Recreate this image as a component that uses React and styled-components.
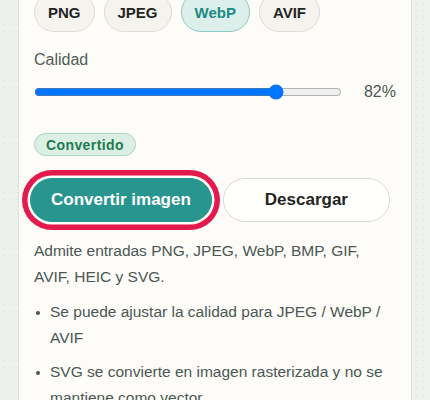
import React from "react";
import styled, { createGlobalStyle } from "styled-components";

const Global = createGlobalStyle`
  html, body { margin: 0; padding: 0; }
  body {
    background-color: #eef1ed;
    background-image: radial-gradient(circle, rgba(180,190,182,0.3) 0.6px, transparent 0.8px);
    background-size: 7px 7px;
    font-family: "Liberation Sans", Arial, sans-serif;
    overflow: hidden;
  }
`;

const Page = styled.div`
  padding: 0 18px;
  margin-top: -40px;
`;

const Card = styled.section`
  background: #fdfcf8;
  border: 1px solid #e2e1d9;
  border-radius: 16px;
  padding: 31px 15px 24px;
  display: flex;
  flex-direction: column;
`;

const ChipRow = styled.div`
  display: flex;
  gap: 9px;
`;

const Chip = styled.button`
  height: 40px;
  padding: 0 13px;
  border-radius: 20px;
  font-family: inherit;
  font-size: 15px;
  font-weight: 700;
  border: 1px solid ${(p) => (p.$active ? "#8ccbc5" : "#dedcd4")};
  background: ${(p) => (p.$active ? "#dcefeb" : "#f4f3ee")};
  color: ${(p) => (p.$active ? "#1b8b84" : "#1f2523")};
`;

const Label = styled.div`
  margin-top: 17px;
  font-size: 16px;
  line-height: 22px;
  color: #505c58;
`;

const SliderRow = styled.div`
  margin-top: 9px;
  height: 24px;
  display: flex;
  align-items: center;
`;

const Range = styled.input`
  flex: 1;
  margin: 0;
  min-width: 0;
`;

const Value = styled.span`
  min-width: 54px;
  text-align: right;
  font-size: 16px;
  color: #4b5753;
`;

const Badge = styled.span`
  align-self: flex-start;
  margin-top: 29px;
  height: 23px;
  box-sizing: border-box;
  padding: 0 11px;
  display: inline-flex;
  align-items: center;
  border-radius: 12px;
  background: #dcefe5;
  border: 1px solid #a9d5c1;
  color: #1f7a52;
  font-size: 14px;
  font-weight: 700;
  letter-spacing: 0.4px;
`;

const ButtonRow = styled.div`
  margin-top: 22px;
  margin-left: -4px;
  display: flex;
  gap: 11px;
`;

const Button = styled.button`
  height: 44px;
  box-sizing: border-box;
  border-radius: 22px;
  font-family: inherit;
  font-size: 17px;
  font-weight: 700;
  padding: 0 ${(p) => (p.$primary ? "20px" : "41px")};
  border: 1px solid ${(p) => (p.$primary ? "#28958f" : "#dcdad2")};
  background: ${(p) => (p.$primary ? "#28958f" : "#fffffd")};
  color: ${(p) => (p.$primary ? "#ffffff" : "#1f2523")};
  ${(p) =>
    p.$highlight &&
    `box-shadow: 0 0 0 2.5px #fdfcf8, 0 0 0 8px #e31b4c;`}
`;

const Text = styled.p`
  margin: 16px 0 0;
  font-size: 15.5px;
  line-height: 26px;
  color: #4b5753;
`;

const List = styled.ul`
  margin: 9px 0 0;
  padding: 0;
  list-style: none;
`;

const Item = styled.li`
  position: relative;
  padding-left: 16px;
  font-size: 15.5px;
  line-height: 26px;
  color: #4b5753;
  & + & { margin-top: 8px; }
  &::before {
    content: "";
    position: absolute;
    left: 2px;
    top: 12px;
    width: 4px;
    height: 4px;
    border-radius: 50%;
    background: #4b5753;
  }
`;

export default function App() {
  const formats = ["PNG", "JPEG", "WebP", "AVIF"];
  return (
    <>
      <Global />
      <Page>
        <Card>
          <ChipRow>
            {formats.map((f) => (
              <Chip key={f} $active={f === "WebP"}>
                {f}
              </Chip>
            ))}
          </ChipRow>
          <Label>Calidad</Label>
          <SliderRow>
            <Range type="range" min={10} max={100} defaultValue={82} />
            <Value>82%</Value>
          </SliderRow>
          <Badge>Convertido</Badge>
          <ButtonRow>
            <Button $primary $highlight>
              Convertir imagen
            </Button>
            <Button>Descargar</Button>
          </ButtonRow>
          <Text>Admite entradas PNG, JPEG, WebP, BMP, GIF, AVIF, HEIC y SVG.</Text>
          <List>
            <Item>Se puede ajustar la calidad para JPEG / WebP / AVIF</Item>
            <Item>SVG se convierte en imagen rasterizada y no se mantiene como vector.</Item>
          </List>
        </Card>
      </Page>
    </>
  );
}
